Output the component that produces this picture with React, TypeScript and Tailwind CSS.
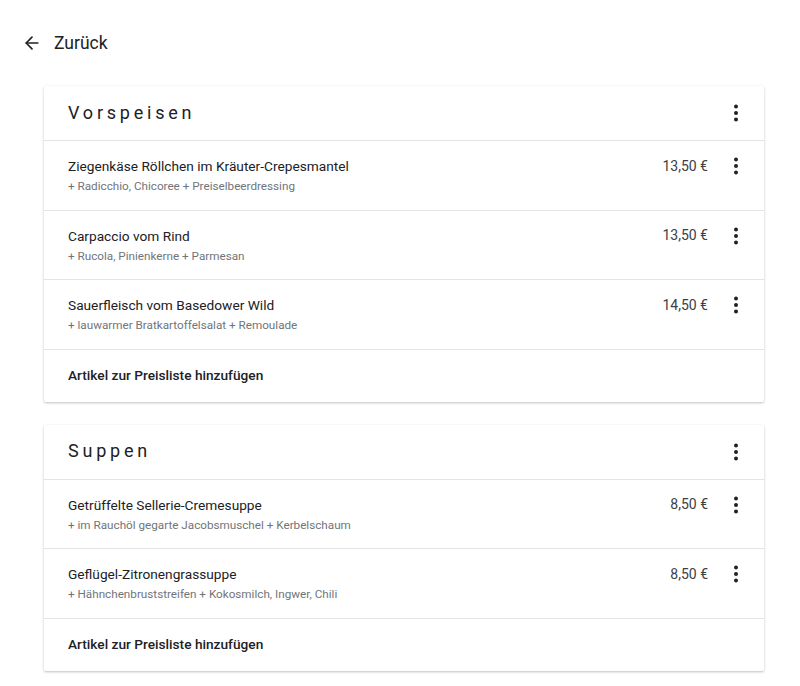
import { ArrowLeft } from "lucide-react";

type Item = { name: string; desc: string; price: string };

const sections: { title: string; items: Item[] }[] = [
  {
    title: "Vorspeisen",
    items: [
      { name: "Ziegenkäse Röllchen im Kräuter-Crepesmantel", desc: "+ Radicchio, Chicoree + Preiselbeerdressing", price: "13,50 €" },
      { name: "Carpaccio vom Rind", desc: "+ Rucola, Pinienkerne + Parmesan", price: "13,50 €" },
      { name: "Sauerfleisch vom Basedower Wild", desc: "+ lauwarmer Bratkartoffelsalat + Remoulade", price: "14,50 €" },
    ],
  },
  {
    title: "Suppen",
    items: [
      { name: "Getrüffelte Sellerie-Cremesuppe", desc: "+ im Rauchöl gegarte Jacobsmuschel + Kerbelschaum", price: "8,50 €" },
      { name: "Geflügel-Zitronengrassuppe", desc: "+ Hähnchenbruststreifen + Kokosmilch, Ingwer, Chili", price: "8,50 €" },
    ],
  },
];

function Dots() {
  return (
    <svg width="24" height="24" viewBox="0 0 24 24" className="text-[#202124]">
      <circle cx="12" cy="5.5" r="2" fill="currentColor" />
      <circle cx="12" cy="12" r="2" fill="currentColor" />
      <circle cx="12" cy="18.5" r="2" fill="currentColor" />
    </svg>
  );
}

function Section({ title, items }: { title: string; items: Item[] }) {
  return (
    <div className="bg-white rounded-[2px] shadow-[0_1px_3px_rgba(0,0,0,0.18),0_1px_2px_rgba(0,0,0,0.08)]">
      <div className="h-[55px] flex items-center justify-between pl-6 pr-4 border-b border-[#e4e4e4]">
        <h2 className="text-[18px] tracking-[0.21em] text-[#202124] font-normal -mt-[2px]">{title}</h2>
        <Dots />
      </div>
      {items.map((it) => (
        <div key={it.name} className="h-[69.5px] flex items-center justify-between pl-6 pr-4 border-b border-[#e4e4e4]">
          <div className="flex flex-col">
            <span className="text-[13.7px] text-[#202124] leading-5">{it.name}</span>
            <span className="text-[11.7px] text-[#70757a] leading-4 mt-[2px]">{it.desc}</span>
          </div>
          <div className="flex items-center gap-4 -mt-[18px]">
            <span className="text-[14px] text-[#3c4043]">{it.price}</span>
            <Dots />
          </div>
        </div>
      ))}
      <div className="h-[52px] flex items-center pl-6">
        <span className="text-[13.7px] font-medium text-[#202124]">Artikel zur Preisliste hinzufügen</span>
      </div>
    </div>
  );
}

export default function App() {
  return (
    <div className="min-h-screen bg-white font-['Roboto',sans-serif]">
      <div className="flex items-center gap-[12px] pl-[22px] pt-[30px] h-[72px]">
        <ArrowLeft className="h-5 w-5 text-[#202124] -mt-[16px]" strokeWidth={2} />
        <span className="text-[17.5px] text-[#202124] -mt-[16px]">Zurück</span>
      </div>
      <div className="w-[720px] ml-[44px] mt-[14px] flex flex-col gap-[23px]">
        {sections.map((s) => (
          <Section key={s.title} title={s.title} items={s.items} />
        ))}
      </div>
    </div>
  );
}
